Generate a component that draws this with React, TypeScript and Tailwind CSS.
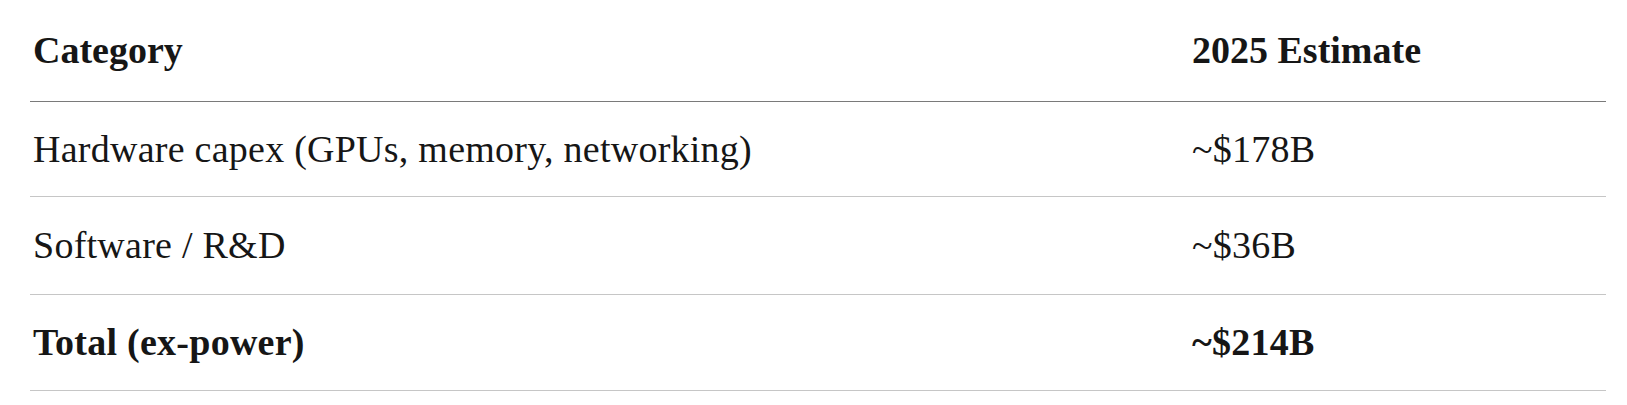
import React from 'react'

interface Row {
  category: string
  estimate: string
  height: string
  bold?: boolean
}

const rows: Row[] = [
  { category: 'Hardware capex (GPUs, memory, networking)', estimate: '~$178B', height: 'h-[95px]' },
  { category: 'Software / R&D', estimate: '~$36B', height: 'h-[98px]' },
  { category: 'Total (ex-power)', estimate: '~$214B', height: 'h-[96px]', bold: true },
]

const App: React.FC = () => {
  return (
    <div className="bg-white w-[1627px] h-[405px] font-['Liberation_Serif',serif] text-[#161616]">
      <div className="ml-[30px] w-[1576px]">
        <div className="grid grid-cols-[1159px_1fr] h-[102px] items-center border-b border-[#7a7a7a] font-bold text-[38px]">
          <span className="pl-[3px]">Category</span>
          <span className="pl-[3px]">2025 Estimate</span>
        </div>
        {rows.map((row) => (
          <div
            key={row.category}
            className={`grid grid-cols-[1159px_1fr] ${row.height} items-center border-b border-[#c6c6c6] text-[38px] tracking-[0.25px] ${
              row.bold ? 'font-bold' : 'font-normal'
            }`}
          >
            <span className="pl-[3px]">{row.category}</span>
            <span className="pl-[3px]">{row.estimate}</span>
          </div>
        ))}
      </div>
    </div>
  )
}

export default App
